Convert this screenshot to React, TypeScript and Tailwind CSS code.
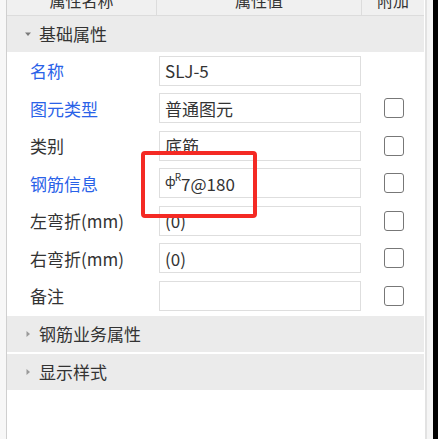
const rows = [
  { label: "名称", value: "SLJ-5", blue: true, check: false },
  { label: "图元类型", value: "普通图元", blue: true, check: true },
  { label: "类别", value: "底筋", blue: false, check: true },
  { label: "钢筋信息", value: "rebar", blue: true, check: true },
  { label: "左弯折(mm)", value: "(0)", blue: false, check: true },
  { label: "右弯折(mm)", value: "(0)", blue: false, check: true },
  { label: "备注", value: "", blue: false, check: true },
]

function Caret({ open }: { open: boolean }) {
  return (
    <svg width="8" height="8" viewBox="0 0 8 8" className="shrink-0">
      {open ? <path d="M1 2.5h6L4 6z" fill="#7a7a7a" /> : <path d="M2.5 1v6L6 4z" fill="#9a9a9a" />}
    </svg>
  )
}

function SectionHeader({ title, open }: { title: string; open: boolean }) {
  return (
    <div className="h-[36px] bg-[#ebebeb] flex items-center pl-[17px] gap-[7px]">
      <Caret open={open} />
      <span className="text-[17px] text-[#333]">{title}</span>
    </div>
  )
}

export default function App() {
  return (
    <div
      className="w-[438px] h-[439px] bg-white flex overflow-hidden relative"
      style={{ fontFamily: '"Microsoft YaHei", "Noto Sans CJK SC", "Noto Sans", sans-serif' }}
    >
      {/* left edge */}
      <div className="w-[7px] bg-[#f7f7f7] border-r border-[#cfcfcf] shrink-0" />

      {/* property grid */}
      <div className="w-[417px] flex flex-col shrink-0">
        {/* column header, scrolled partly out of view */}
        <div className="h-[16px] bg-[#f0f0f0] border-b border-[#dcdcdc] flex overflow-hidden text-[16px] text-[#333] shrink-0">
          <div className="w-[150px] border-r border-[#dcdcdc] flex justify-center">
            <span className="mt-[-12px] leading-[24px]">属性名称</span>
          </div>
          <div className="w-[205px] border-r border-[#dcdcdc] flex justify-center">
            <span className="mt-[-12px] leading-[24px]">属性值</span>
          </div>
          <div className="flex-1 flex justify-center">
            <span className="mt-[-12px] leading-[24px]">附加</span>
          </div>
        </div>

        <SectionHeader title="基础属性" open />

        {rows.map((r) => (
          <div key={r.label} className="h-[37.5px] flex items-center shrink-0">
            <div className={`w-[152px] pl-[23px] text-[17px] ${r.blue ? "text-[#2a62e8]" : "text-[#333]"}`}>
              {r.label}
            </div>
            <div className="w-[202px] h-[30px] border border-[#dedede] flex items-center px-[5px] text-[17px] text-[#333]">
              {r.value === "rebar" ? (
                <span className="flex items-start">
                  <span className="text-[13px] leading-[20px]">ф</span>
                  <span className="text-[10px] leading-[12px] -ml-[1px]">R</span>
                  <span>7@180</span>
                </span>
              ) : (
                r.value
              )}
            </div>
            <div className="flex-1 flex justify-center pl-[3px]">
              {r.check && <div className="w-[20px] h-[20px] border-[1.5px] border-[#777] rounded-[3px] bg-white" />}
            </div>
          </div>
        ))}

        <div className="mt-[1px]">
          <SectionHeader title="钢筋业务属性" open={false} />
        </div>
        <div className="h-[2px] bg-white" />
        <SectionHeader title="显示样式" open={false} />
        <div className="flex-1 bg-white" />
      </div>

      {/* right edge */}
      <div className="w-[1px] bg-white shrink-0" />
      <div className="w-[8px] bg-[#f5f5f5] border-l-2 border-[#e2e2e2] shrink-0" />
      <div className="flex-1 bg-black" />

      {/* red annotation box */}
      <div className="absolute left-[141px] top-[151px] w-[116px] h-[67px] border-[4px] border-[#f42a24] rounded-[4px]" />
    </div>
  )
}
